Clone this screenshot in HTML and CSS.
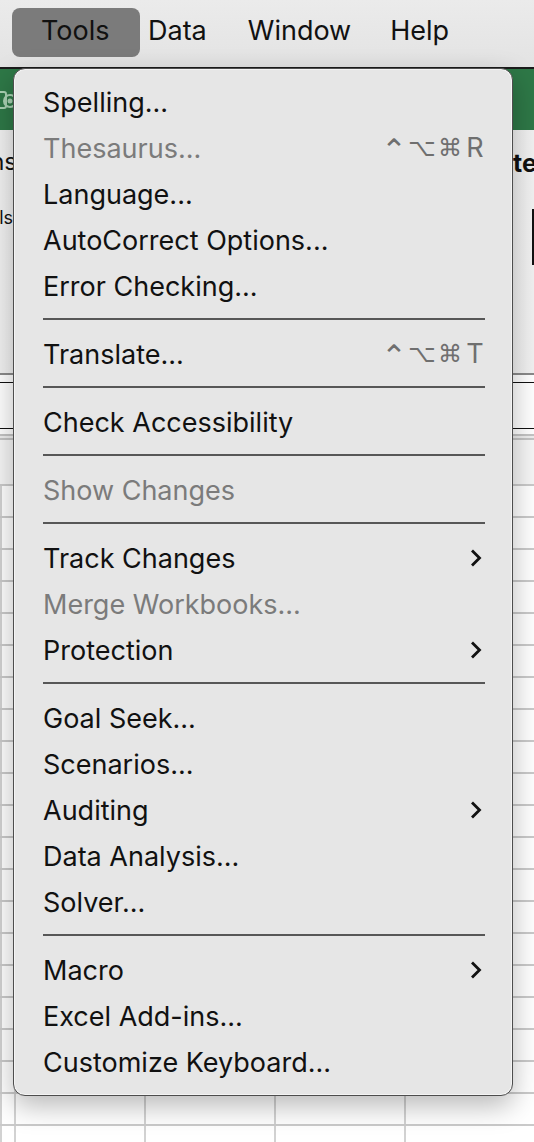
FILE: index.html
```html
<!DOCTYPE html>
<html>
<head>
<meta charset="utf-8">
<link rel="stylesheet" href="styles.css">
</head>
<body>
<div class="screen">
  <header class="menubar">
    <span class="mb-item mb-active">Tools</span>
    <span class="mb-item mb-data">Data</span>
    <span class="mb-item mb-window">Window</span>
    <span class="mb-item mb-help">Help</span>
  </header>
  <div class="tabs">
    <svg class="tab-icon" width="14" height="26" viewBox="0 0 14 26"><rect x="-8" y="4" width="14" height="16" rx="2" fill="none" stroke="#a9d1b3" stroke-width="2"/><circle cx="10" cy="13" r="6" fill="none" stroke="#a9d1b3" stroke-width="2"/><circle cx="10" cy="13" r="2.5" fill="#a9d1b3"/></svg>
  </div>
  <div class="ribbon">
    <div class="rib-left">
      <span class="rib-big">Functions</span>
      <span class="rib-small">Tools</span>
    </div>
    <div class="rib-right">
      <span class="rib-bold">text</span>
      <span class="rib-box"></span>
    </div>
  </div>
  <div class="rule-gray"></div>
  <div class="fbar"></div>
  <div class="colhead"></div>
  <div class="grid"></div>

  <nav class="menu">
    <div class="item"><span>Spelling...</span></div>
    <div class="item dis"><span>Thesaurus...</span><span class="keys"><span class="k k-ctrl">⌃</span><span class="k k-opt">⌥</span><span class="k k-cmd">⌘</span><span class="k k-let">R</span></span></div>
    <div class="item"><span>Language...</span></div>
    <div class="item"><span>AutoCorrect Options...</span></div>
    <div class="item"><span>Error Checking...</span></div>
    <div class="sep"></div>
    <div class="item"><span>Translate...</span><span class="keys"><span class="k k-ctrl">⌃</span><span class="k k-opt">⌥</span><span class="k k-cmd">⌘</span><span class="k k-let">T</span></span></div>
    <div class="sep"></div>
    <div class="item"><span>Check Accessibility</span></div>
    <div class="sep"></div>
    <div class="item dis"><span>Show Changes</span></div>
    <div class="sep"></div>
    <div class="item"><span>Track Changes</span><svg class="chev" width="12" height="20" viewBox="0 0 12 20"><path d="M2 2.5 L9.5 10 L2 17.5" fill="none" stroke="#111" stroke-width="2.8"/></svg></div>
    <div class="item dis"><span>Merge Workbooks...</span></div>
    <div class="item"><span>Protection</span><svg class="chev" width="12" height="20" viewBox="0 0 12 20"><path d="M2 2.5 L9.5 10 L2 17.5" fill="none" stroke="#111" stroke-width="2.8"/></svg></div>
    <div class="sep"></div>
    <div class="item"><span>Goal Seek...</span></div>
    <div class="item"><span>Scenarios...</span></div>
    <div class="item"><span>Auditing</span><svg class="chev" width="12" height="20" viewBox="0 0 12 20"><path d="M2 2.5 L9.5 10 L2 17.5" fill="none" stroke="#111" stroke-width="2.8"/></svg></div>
    <div class="item"><span>Data Analysis...</span></div>
    <div class="item"><span>Solver...</span></div>
    <div class="sep"></div>
    <div class="item"><span>Macro</span><svg class="chev" width="12" height="20" viewBox="0 0 12 20"><path d="M2 2.5 L9.5 10 L2 17.5" fill="none" stroke="#111" stroke-width="2.8"/></svg></div>
    <div class="item"><span>Excel Add-ins...</span></div>
    <div class="item"><span>Customize Keyboard...</span></div>
  </nav>
</div>
</body>
</html>
```

FILE: styles.css
```css
* { box-sizing: border-box; }
html, body { margin: 0; padding: 0; }
body {
  width: 534px;
  height: 1142px;
  overflow: hidden;
  font-family: Inter, "Liberation Sans", sans-serif;
  color: #111;
  background: #fff;
}
.screen {
  position: relative;
  width: 534px;
  height: 1142px;
  overflow: hidden;
  display: flex;
  flex-direction: column;
}
.menubar {
  height: 69px;
  flex: none;
  display: flex;
  align-items: flex-start;
  background: linear-gradient(#ebebeb, #e3e3e3);
  border-bottom: 2px solid #1b1b1b;
  font-size: 27px;
}
.mb-item {
  height: 49px;
  margin-top: 8px;
  line-height: 46px;
  color: #111;
}
.mb-active {
  margin-left: 12px;
  width: 128px;
  padding-left: 29px;
  background: #7b7b7b;
  border-radius: 8px;
}
.mb-data { margin-left: 8px; }
.mb-window { margin-left: 41px; }
.mb-help { margin-left: 39px; }

.tabs {
  height: 61px;
  flex: none;
  background: #2e7847;
  display: flex;
  align-items: center;
  padding-top: 2px;
}
.tab-icon { display: block; }

.ribbon {
  height: 243px;
  flex: none;
  background: linear-gradient(90deg, #f1f1f1, #fafafa 50%, #f1f1f1);
  display: flex;
  justify-content: space-between;
}
.rib-left {
  width: 13px;
  overflow: hidden;
  display: flex;
  flex-direction: column;
  align-items: flex-end;
  padding-top: 17px;
}
.rib-big { font-size: 24px; line-height: 30px; white-space: nowrap; margin-right: -4px; }
.rib-small { font-size: 18px; line-height: 22px; margin-top: 30px; white-space: nowrap; }
.rib-right {
  width: 21px;
  overflow: hidden;
  display: flex;
  flex-direction: column;
  align-items: flex-start;
  padding-top: 17px;
}
.rib-bold { font-size: 25px; font-weight: 700; line-height: 32px; white-space: nowrap; }
.rib-box {
  display: block;
  width: 10px;
  height: 56px;
  margin-top: 30px;
  margin-left: 19px;
  border-left: 2px solid #111;
}

.rule-gray { height: 2px; flex: none; background: #8a8a8a; }
.fbar {
  height: 47px;
  flex: none;
  margin-top: 7px;
  background: #fff;
  border-top: 1px solid #111;
  border-bottom: 1px solid #111;
}
.colhead {
  height: 55px;
  flex: none;
  background:
    linear-gradient(#fff 0 5px, #c4c4c4 5px 7px, #eee 7px 9px, #c4c4c4 9px 11px, #f6f6f6 11px);
}
.grid {
  flex: 1;
  background-color: #fff;
  background-image:
    repeating-linear-gradient(to bottom, #cacaca 0 2px, transparent 2px 32px),
    repeating-linear-gradient(to right, #d2d2d2 0 2px, transparent 2px 130px);
  background-position: 0 0, 14px 0;
}

.menu {
  position: absolute;
  left: 13px;
  top: 68px;
  width: 500px;
  height: 1028px;
  background: #e6e6e6;
  border: 1.5px solid #4d4d4d;
  border-radius: 12px;
  box-shadow: inset 0 0 0 1px rgba(255,255,255,0.55), 0 10px 28px rgba(0,0,0,0.28);
  padding: 10px 27px 0 29px;
  font-size: 27px;
}
.item {
  height: 46px;
  display: flex;
  align-items: center;
  justify-content: space-between;
  color: #111;
  white-space: nowrap;
}
.item.dis { color: #7b7b7b; }
.sep {
  height: 2px;
  margin: 9px 0 11px 0;
  background: #575757;
}
.keys {
  display: flex;
  align-items: center;
  height: 46px;
  color: #6f6f6f;
  font-family: "DejaVu Sans", sans-serif;
  font-size: 24px;
}
.k { display: block; text-align: center; line-height: 46px; }
.k-ctrl { width: 23px; font-size: 31px; line-height: 46px; padding-top: 4px; }
.k-opt { width: 27px; margin-left: 4px; }
.k-cmd { width: 22px; margin-left: 3px; }
.k-let { width: 20px; margin-left: 5px; font-family: Inter, "Liberation Sans", sans-serif; font-size: 27px; }
.chev { display: block; margin-right: 3px; }
```
